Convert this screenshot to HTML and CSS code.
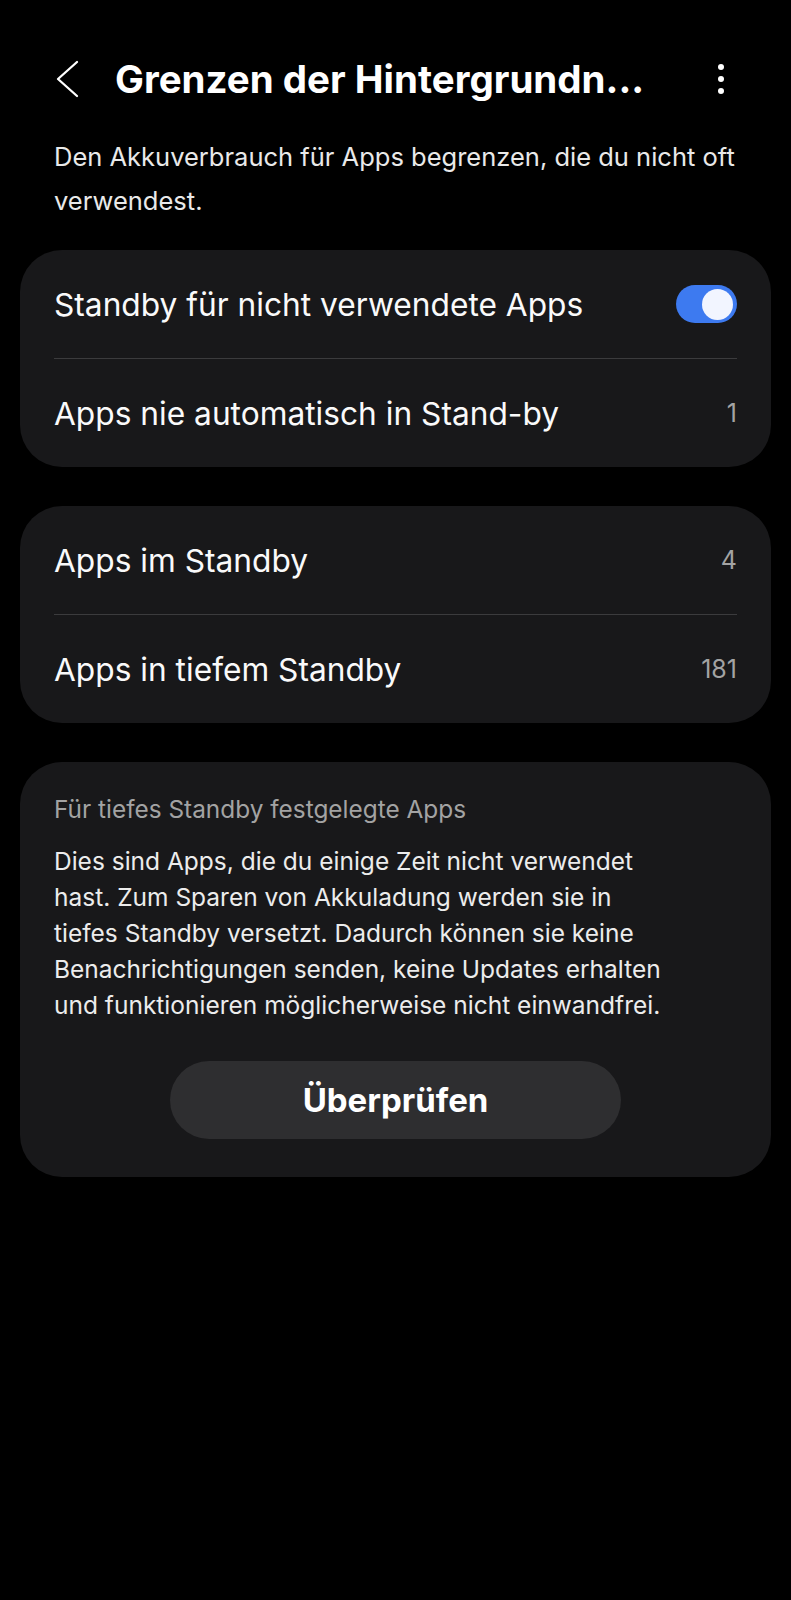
FILE: index.html
```html
<!DOCTYPE html>
<html lang="de">
<head>
<meta charset="utf-8">
<title>Grenzen der Hintergrundnutzung</title>
<link rel="stylesheet" href="styles.css">
</head>
<body>
<div class="screen">
  <header class="appbar">
    <button class="back" aria-label="Zurück">
      <svg width="24" height="38" viewBox="0 0 24 38"><polyline points="21,2 2,19 21,36" fill="none" stroke="#ffffff" stroke-width="2.3" stroke-linecap="round" stroke-linejoin="round"/></svg>
    </button>
    <h1 class="title">Grenzen der Hintergrundn...</h1>
    <button class="more" aria-label="Mehr Optionen">
      <svg width="12" height="34" viewBox="0 0 12 34"><circle cx="6" cy="5" r="3" fill="#fff"/><circle cx="6" cy="17" r="3" fill="#fff"/><circle cx="6" cy="29" r="3" fill="#fff"/></svg>
    </button>
  </header>

  <p class="intro">Den Akkuverbrauch für Apps begrenzen, die du nicht oft verwendest.</p>

  <section class="card">
    <div class="row">
      <span class="label">Standby für nicht verwendete Apps</span>
      <span class="switch on"><span class="thumb"></span></span>
    </div>
    <div class="divider"></div>
    <div class="row">
      <span class="label">Apps nie automatisch in Stand-by</span>
      <span class="value">1</span>
    </div>
  </section>

  <section class="card">
    <div class="row">
      <span class="label">Apps im Standby</span>
      <span class="value">4</span>
    </div>
    <div class="divider"></div>
    <div class="row">
      <span class="label">Apps in tiefem Standby</span>
      <span class="value">181</span>
    </div>
  </section>

  <section class="card info">
    <h2 class="info-title">Für tiefes Standby festgelegte Apps</h2>
    <p class="info-text">Dies sind Apps, die du einige Zeit nicht verwendet<br>hast. Zum Sparen von Akkuladung werden sie in<br>tiefes Standby versetzt. Dadurch können sie keine<br>Benachrichtigungen senden, keine Updates erhalten<br>und funktionieren möglicherweise nicht einwandfrei.</p>
    <button class="review">Überprüfen</button>
  </section>
</div>
</body>
</html>
```

FILE: styles.css
```css
* { box-sizing: border-box; }

html, body {
  margin: 0;
  padding: 0;
  background: #000000;
}

body {
  font-family: Inter, Roboto, "Noto Sans", "Liberation Sans", sans-serif;
  color: #ffffff;
  width: 791px;
  min-height: 1600px;
}

.screen {
  padding: 49px 20px 0 20px;
}

.appbar {
  display: flex;
  align-items: center;
  height: 60px;
}

.back, .more {
  background: none;
  border: 0;
  padding: 0;
  display: flex;
  align-items: center;
  justify-content: center;
  cursor: pointer;
}

.back {
  width: 24px;
  height: 60px;
  margin-left: 36px;
}

.title {
  margin: 0 0 0 35px;
  font-size: 38.5px;
  font-weight: 700;
  line-height: 60px;
  white-space: nowrap;
}

.more {
  width: 12px;
  height: 60px;
  margin-left: auto;
  margin-right: 44px;
}

.intro {
  margin: 26px 0 27px 34px;
  font-size: 25.5px;
  line-height: 44px;
  color: #e9e9e9;
}

.card {
  background: #18181a;
  border-radius: 42px;
  margin-bottom: 39px;
}

.row {
  height: 108px;
  display: flex;
  align-items: center;
  justify-content: space-between;
  padding: 0 34px;
}

.label {
  font-size: 31.7px;
  color: #fafafa;
}

.value {
  font-size: 25px;
  color: #a3a3a3;
}

.divider {
  height: 1px;
  margin: 0 34px;
  background: #3b3b3d;
}

.switch {
  width: 61px;
  height: 38px;
  border-radius: 19px;
  background: #3d7af0;
  display: flex;
  align-items: center;
  justify-content: flex-end;
  padding-right: 4px;
}

.thumb {
  width: 31px;
  height: 31px;
  border-radius: 50%;
  background: #f2f5ff;
}

.info {
  padding: 32px 34px 38px 34px;
  display: flex;
  flex-direction: column;
}

.info-title {
  margin: 0;
  font-size: 24.4px;
  font-weight: 400;
  line-height: 30px;
  color: #a3a3a3;
}

.info-text {
  margin: 19px 0 0 0;
  font-size: 24.5px;
  line-height: 36px;
  color: #ececec;
  white-space: nowrap;
}

.review {
  align-self: center;
  margin-top: 38px;
  width: 451px;
  height: 78px;
  border: 0;
  border-radius: 39px;
  background: #2e2e30;
  color: #ffffff;
  font-family: Inter, Roboto, "Noto Sans", "Liberation Sans", sans-serif;
  font-size: 33px;
  font-weight: 700;
  cursor: pointer;
}
```
